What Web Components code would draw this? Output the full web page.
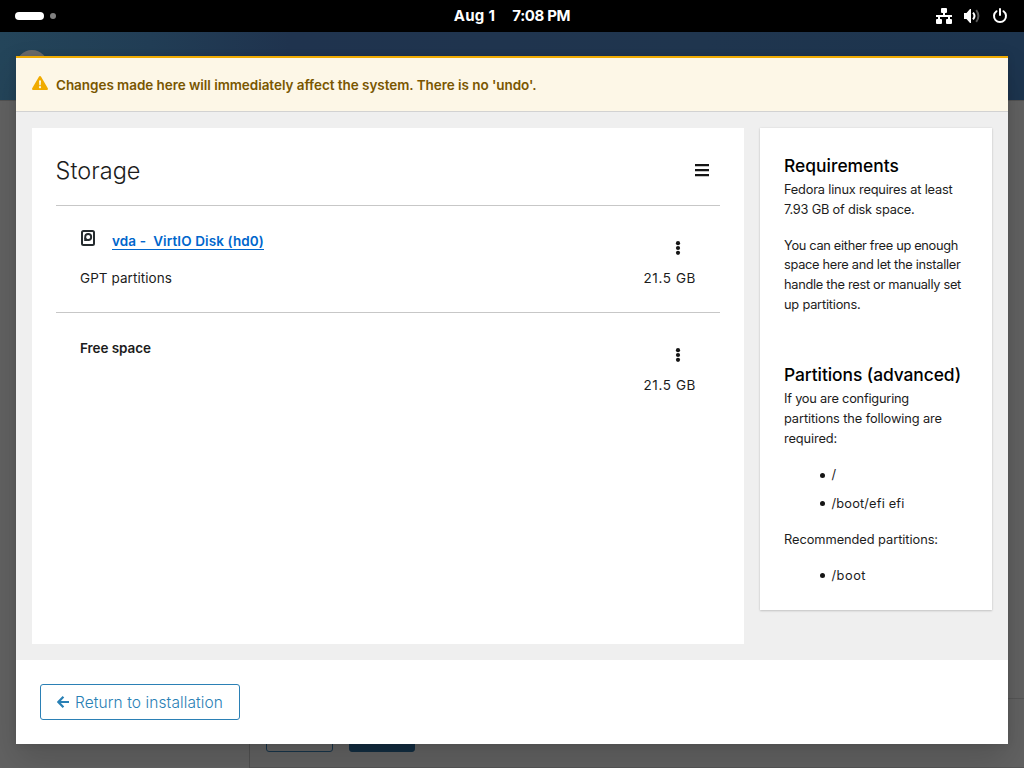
<!DOCTYPE html>
<html lang="en">
<head>
<meta charset="utf-8">
<title>Storage</title>
<style>
html,body{margin:0;height:100%;overflow:hidden;background:#000}
body{font-family:Inter,"Liberation Sans",sans-serif;color:#1c1c1c}
</style>
</head>
<body>
<installer-desktop></installer-desktop>
<script>
const define = (name, html, setup) => customElements.define(name, class extends HTMLElement {
  connectedCallback() {
    if (this.shadowRoot) return;
    const t = document.createElement('template');
    t.innerHTML = html;
    this.attachShadow({mode: 'open'}).append(t.content.cloneNode(true));
    if (setup) setup.call(this, this.shadowRoot);
  }
});

/* One line of text, tracked so that it fills the width in its "w" attribute. */
define('text-line', `<style>:host{display:block;white-space:pre}span{display:inline-block}</style><span><slot></slot></span>`, function (root) {
  const s = root.querySelector('span');
  const w = s.getBoundingClientRect().width;
  const n = this.textContent.length;
  if (this.hasAttribute('w') && w) s.style.letterSpacing = ((+this.getAttribute('w') - w) / n) + 'px';
});

define('top-bar', `<style>
:host{display:grid;grid-template-columns:1fr auto 1fr;align-items:center;height:32px;background:#000;color:#fff;font:700 15px/32px Inter,sans-serif}
.dots{display:flex;align-items:center;gap:6px;padding-left:15px}
.pill{width:29px;height:8px;border-radius:4px;background:#fff}
.dot{width:6px;height:6px;border-radius:50%;background:#808080}
.clock{display:flex;gap:17px}
.status{display:flex;justify-content:flex-end;gap:12px;padding-right:16px}
svg{display:block;width:16px;height:16px}
</style>
<div class="dots"><i class="pill"></i><i class="dot"></i></div>
<div class="clock"><text-line w="41.5">Aug 1</text-line><text-line w="58">7:08 PM</text-line></div>
<div class="status">
<svg viewBox="0 0 16 16" fill="#fff"><path d="M6 0h4a1 1 0 0 1 1 1v3a1 1 0 0 1-1 1H9v2h7v2h-2v2h1a1 1 0 0 1 1 1v3a1 1 0 0 1-1 1h-4a1 1 0 0 1-1-1v-3a1 1 0 0 1 1-1h1V9H4v2h1a1 1 0 0 1 1 1v3a1 1 0 0 1-1 1H1a1 1 0 0 1-1-1v-3a1 1 0 0 1 1-1h1V9H0V7h7V5H6a1 1 0 0 1-1-1V1a1 1 0 0 1 1-1z"/></svg>
<svg viewBox="0 0 16 16"><path fill="#fff" d="M0 5h2.500L6 1h1v14H6L2.500 11H0z"/><path d="M9 4.700q3 3.300 0 6.600" fill="none" stroke="#fff" stroke-width="2"/><path d="M12.200 2.200q4.400 5.800 0 11.600" fill="none" stroke="#595959" stroke-width="2"/></svg>
<svg viewBox="0 0 16 16" fill="none" stroke="#fff" stroke-width="2"><path d="M4.500 3.200A6 6 0 1 0 11.500 3.200M8 1v6" stroke-linecap="round"/></svg>
</div>`);

define('page-behind', `<style>
:host{display:grid;grid-template-rows:69px 1fr;height:736px;background:#626262}
header{background:linear-gradient(90deg,#24455a 0,#223e56 150px,#20344f 290px,#20364f 700px,#1d354f 100%);padding:18px 16px 0;border-bottom:1px solid #525252;box-sizing:border-box;overflow:hidden}
header i{display:block;width:32px;height:32px;border-radius:50%;background:#6b6b6b}
main{display:grid;grid-template-columns:250px 1fr}
nav{border-right:1px solid #505050;box-sizing:border-box}
section{display:flex;flex-direction:column;justify-content:flex-end}
footer{height:70px;border-top:1px solid #565656;border-bottom:1px solid #565656;box-sizing:border-box;display:flex;gap:16px;padding:17px 16px 0}
b{box-sizing:border-box;height:36px;width:67px;border:1px solid #17344a;border-radius:3px}
b+b{width:66px;background:#132d41;border-color:#132d41}
</style><header><i></i></header><main><nav></nav><section><footer><b></b><b></b></footer></section></main>`);

define('warning-banner', `<style>
:host{display:flex;box-sizing:border-box;height:56px;border-top:2px solid #f0ab00;border-bottom:1px solid #d2d2d2;background:#fdf7e7;padding:16px 16px 0;gap:8px;color:#795600;font-weight:600;font-size:13.500px;line-height:22px}
svg{width:16px;height:16px;margin-top:1px}
</style>
<svg viewBox="0 0 16 16"><path fill="#f0ab00" fill-rule="evenodd" d="M8 1q.7 0 1.100.7l6.700 11.500q.6 1.600-.9 1.800H1.100q-1.500-.2-.9-1.800L6.900 1.700Q7.300 1 8 1zM7 5.500l.3 4.700h1.400L9 5.500zM8 11a1.100 1.100 0 1 0 .01 0z"/></svg>
<slot></slot>`);

define('kebab-menu', `<style>:host{display:block;width:6px;height:14px}svg{display:block}</style>
<svg width="6" height="14" viewBox="0 0 6 14" fill="#151515"><circle cx="3" cy="2.200" r="2.100"/><circle cx="3" cy="7" r="2.100"/><circle cx="3" cy="11.800" r="2.100"/></svg>`);

define('storage-row', `<style>
:host{display:grid;grid-template-columns:1fr auto;box-sizing:border-box;height:107px;border-top:1px solid #c7c7c7;padding:24px 24px 0;font-size:13.500px;line-height:21px}
.end{display:flex;flex-direction:column;align-items:flex-end}
kebab-menu{margin:11px 15px 13px 0}
</style><div><slot></slot></div><div class="end"><kebab-menu></kebab-menu><text-line w="52.500">21.5 GB</text-line></div>`);

define('storage-card', `<style>
:host{display:block;background:#fff;width:712px;height:516px;padding:24px;box-sizing:border-box}
header{display:flex;justify-content:space-between;height:53px;padding-right:11px;line-height:38px;font-size:23.500px;font-weight:350}
header svg{margin-top:12px}
header text-line{margin-left:-.5px}
.name{display:flex;gap:16px;height:38px;font-weight:600;color:#06c}
.name svg{margin-top:-1px}
.name text-line{height:19px;margin-top:1px;line-height:20px;border-bottom:1px solid #06c;box-sizing:border-box}
.free{font-weight:600;padding-top:1px}
</style>
<header><text-line w="85">Storage</text-line><svg width="14" height="13" viewBox="0 0 14 13"><path d="M0 1.200h14M0 6.200h14M0 11.200h14" stroke="#151515" stroke-width="2.200"/></svg></header>
<storage-row><div class="name"><svg width="16" height="18" viewBox="0 0 16 18"><rect x="2" y="2" width="12" height="14" rx="1.500" fill="none" stroke="#252b2e" stroke-width="2"/><circle cx="8.200" cy="8" r="3" fill="none" stroke="#252b2e" stroke-width="1.900"/><path d="M4.200 8v4h4l-2-1.300z" fill="#252b2e"/></svg><text-line w="152">vda -  VirtIO Disk (hd0)</text-line></div><text-line w="92">GPT partitions</text-line></storage-row>
<storage-row><text-line class="free" w="71">Free space</text-line></storage-row>`);

define('requirements-card', `<style>
:host{display:block;background:#fff;width:232px;height:482px;padding:24px;box-sizing:border-box;box-shadow:0 1px 2px rgba(3,3,3,.16),0 0 2px rgba(3,3,3,.08);font-size:12.800px;line-height:19.650px}
h2{margin:0;font-weight:500;font-size:17.400px;line-height:27px;color:#000}
p{margin:0 0 16px}
.req{padding-bottom:1px}
.req+p{margin-bottom:16.300px}
.adv{margin-top:46.900px;padding-bottom:1.200px}
.adv+p{margin-bottom:17.200px}
ul{list-style:none;margin:0 0 16.300px;padding:0 0 0 36px;display:grid;gap:9px}
li{display:flex;align-items:center;gap:6.500px}
li::before{content:"";width:5px;height:5px;border-radius:50%;background:#151515}
</style>
<h2 class="req"><text-line w="115">Requirements</text-line></h2>
<p><text-line w="168.500">Fedora linux requires at least</text-line><text-line w="130.500">7.93 GB of disk space.</text-line></p>
<p><text-line w="174">You can either free up enough</text-line><text-line w="176.500">space here and let the installer</text-line><text-line w="177">handle the rest or manually set</text-line><text-line w="76.500">up partitions.</text-line></p>
<h2 class="adv"><text-line w="177">Partitions (advanced)</text-line></h2>
<p><text-line w="125">If you are configuring</text-line><text-line w="158">partitions the following are</text-line><text-line w="53">required:</text-line></p>
<ul><li><text-line w="6.500">/</text-line></li><li><text-line w="73">/boot/efi efi</text-line></li></ul>
<p><text-line w="154">Recommended partitions:</text-line></p>
<ul><li><text-line w="34.500">/boot</text-line></li></ul>`);

define('return-button', `<style>
:host{display:flex;box-sizing:border-box;width:200px;height:36px;border:1px solid #2b80b5;border-radius:3px;padding:0 16px;gap:6px;align-items:center;color:#2980b5;font-size:15.500px;font-weight:350;line-height:34px}
text-line{padding-top:1px}
</style><svg width="14" height="14" viewBox="0 0 14 14" fill="none" stroke="#2980b5" stroke-width="2.600"><path d="M7.500.9 1.600 7l5.900 6.100M2 7h12"/></svg><text-line w="148">Return to installation</text-line>`);

define('storage-dialog', `<style>
:host{display:flex;flex-direction:column;width:992px;height:688px;background:#fff;box-shadow:0 16px 32px rgba(3,3,3,.16),0 0 8px rgba(3,3,3,.1)}
main{display:flex;align-items:flex-start;gap:16px;padding:16px;height:548px;box-sizing:border-box;background:#efefef}
footer{padding:24px}
</style>
<warning-banner><text-line w="480.500">Changes made here will immediately affect the system. There is no 'undo'.</text-line></warning-banner>
<main><storage-card></storage-card><requirements-card></requirements-card></main>
<footer><return-button></return-button></footer>`);

define('installer-desktop', `<style>
:host{display:block;position:relative;width:1024px;height:768px;overflow:hidden}
storage-dialog{position:absolute;left:16px;top:56px}
</style><top-bar></top-bar><page-behind></page-behind><storage-dialog></storage-dialog>`);
</script>
</body>
</html>
